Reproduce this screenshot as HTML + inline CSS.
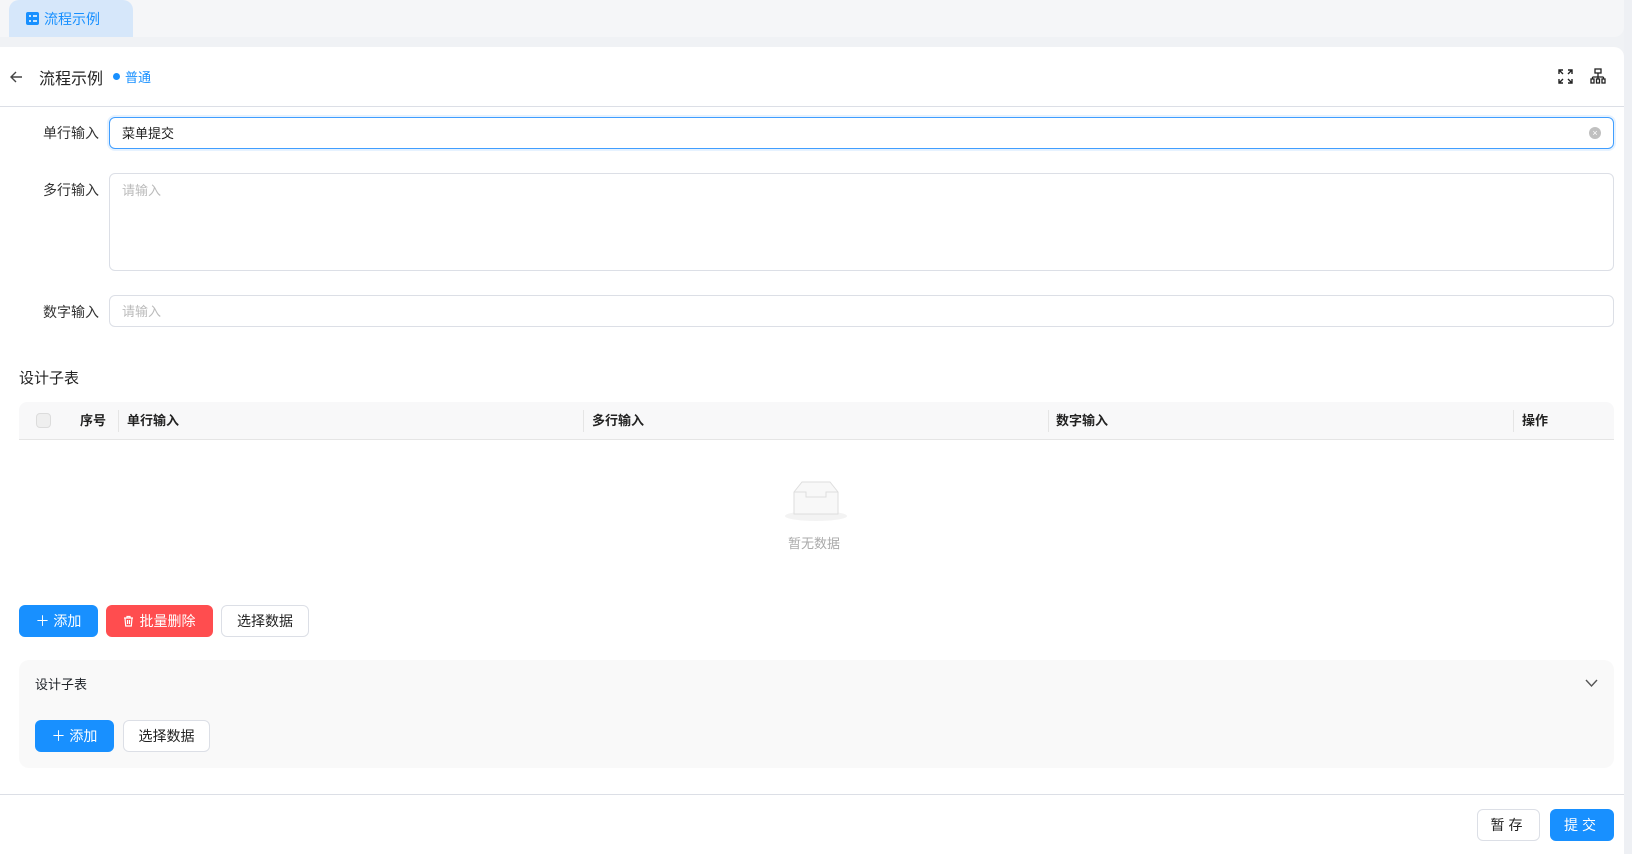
<!DOCTYPE html>
<html><head><meta charset="utf-8"><style>
*{box-sizing:border-box;margin:0;padding:0}
body{width:1632px;height:854px;overflow:hidden;background:#f0f2f5;font-family:"Liberation Sans","Noto Sans CJK SC",sans-serif;font-size:14px;color:#1f2329;position:relative}
.abs{position:absolute}
.tabbar{left:0;top:0;width:1624px;height:37px;background:#f5f6f8;border-radius:0 0 10px 0}
.tab{left:9px;top:0;width:124px;height:37px;background:#d6e7fa;border-radius:10px 10px 0 0;color:#1890ff;font-size:14px;line-height:38px;padding-left:35px}
.card{left:0;top:47px;width:1624px;height:807px;background:#fff;border-radius:0 10px 0 0}
.line{height:1px;background:#dcdfe6}
.lbl{width:99px;text-align:right;font-size:14px;color:#333}
.inp{left:109px;width:1505px;border:1px solid #dcdfe6;border-radius:6px;font-size:13px;color:#bbb;padding-left:12px}
.btn{height:32px;border-radius:6px;font-size:14px;line-height:32px;text-align:center}
.blue{background:#1890ff;color:#fff}
.red{background:#ff4d4f;color:#fff}
.wh{background:#fff;border:1px solid #dcdfe6;color:#222;line-height:30px}
.th{top:402px;font-size:13px;font-weight:bold;line-height:38px;color:#222}
.dv{top:410px;width:1px;height:22px;background:#e5e5e5}
</style></head><body>
<div class="abs tabbar"></div>
<div class="abs tab"><svg class="abs" style="left:17px;top:12px" width="13" height="13" viewBox="0 0 13 13"><rect width="13" height="13" rx="2" fill="#1890ff"/><path d="M3 4h2M7 4h4M3 9h2M7 9h4" stroke="#fff" stroke-width="1.4"/></svg>流程示例</div>
<div class="abs" style="left:1624px;top:0;width:8px;height:854px;background:#eef0f4"></div>
<div class="abs card"></div>
<svg class="abs" style="left:9px;top:70px" width="14" height="14" viewBox="0 0 14 14"><path d="M13 7H2M7 2L2 7l5 5" stroke="#444" stroke-width="1.4" fill="none"/></svg>
<div class="abs" style="left:39px;top:65px;font-size:16px;color:#222">流程示例</div>
<div class="abs" style="left:113px;top:73px;width:7px;height:7px;border-radius:50%;background:#1890ff"></div>
<div class="abs" style="left:125px;top:67px;font-size:13px;color:#1890ff">普通</div>
<svg class="abs" style="left:1558px;top:69px" width="15" height="15" viewBox="0 0 15 15" fill="none" stroke="#222" stroke-width="1.4"><path d="M1 5V1h4M1 1l4 4M10 1h4v4M14 1l-4 4M1 10v4h4M1 14l4-4M14 10v4h-4M14 14l-4-4"/></svg>
<svg class="abs" style="left:1590px;top:68px" width="16" height="16" viewBox="0 0 16 16" fill="none" stroke="#222" stroke-width="1.3"><rect x="5" y="1" width="6" height="4"/><path d="M8 5v4M2.5 9h11M2.5 9v2M8 9v2M13.5 9v2"/><rect x="1" y="11" width="3" height="4"/><rect x="6.5" y="11" width="3" height="4"/><rect x="12" y="11" width="3" height="4"/></svg>
<div class="abs line" style="left:0;top:106px;width:1624px"></div>

<div class="abs lbl" style="left:0;top:123px">单行输入</div>
<div class="abs inp" style="top:117px;height:32px;border-color:#409eff;box-shadow:0 0 0 2px #e6f2ff;color:#222;line-height:31px">菜单提交</div>
<div class="abs" style="left:1589px;top:127px;width:12px;height:12px;border-radius:50%;background:#c0c0c0;color:#fff;font-size:9px;line-height:12px;text-align:center">×</div>

<div class="abs lbl" style="left:0;top:180px">多行输入</div>
<div class="abs inp" style="top:173px;height:98px;padding-top:6px">请输入</div>

<div class="abs lbl" style="left:0;top:302px">数字输入</div>
<div class="abs inp" style="top:295px;height:32px;line-height:31px">请输入</div>

<div class="abs" style="left:19px;top:367px;font-size:15px;color:#222">设计子表</div>
<div class="abs" style="left:19px;top:402px;width:1595px;height:38px;background:#f8f8f9;border-radius:8px 8px 0 0;border-bottom:1px solid #e5e5e5"></div>
<div class="abs" style="left:36px;top:413px;width:15px;height:15px;border:1px solid #dcdcdc;border-radius:4px;background:#efefef"></div>
<div class="abs th" style="left:80px">序号</div>
<div class="abs dv" style="left:118px"></div>
<div class="abs th" style="left:127px">单行输入</div>
<div class="abs dv" style="left:583px"></div>
<div class="abs th" style="left:592px">多行输入</div>
<div class="abs dv" style="left:1048px"></div>
<div class="abs th" style="left:1056px">数字输入</div>
<div class="abs dv" style="left:1513px"></div>
<div class="abs th" style="left:1522px">操作</div>

<svg class="abs" style="left:784px;top:480px" width="64" height="44" viewBox="0 0 64 44"><ellipse cx="32" cy="36" rx="31" ry="5" fill="#f3f3f3"/><path d="M10 12L18 2h28l8 10v22H10z" fill="#f8f8f8" stroke="#dedede"/><path d="M10 12h12v5h20v-5h12" fill="none" stroke="#dedede"/></svg>
<div class="abs" style="left:788px;top:533px;font-size:13px;color:#aaa">暂无数据</div>

<div class="abs btn blue" style="left:19px;top:605px;width:79px">＋ 添加</div>
<div class="abs btn red" style="left:106px;top:605px;width:107px;padding-left:16px">批量删除<svg class="abs" style="left:17px;top:10px" width="11" height="12" viewBox="0 0 11 12" fill="none" stroke="#fff" stroke-width="1.2"><path d="M1 3h9M4 3V1.5h3V3M2 3l.7 8h5.6L9 3M4.5 5v4M6.5 5v4"/></svg></div>
<div class="abs btn wh" style="left:221px;top:605px;width:88px">选择数据</div>

<div class="abs" style="left:19px;top:660px;width:1595px;height:108px;background:#f9f9f9;border-radius:10px"></div>
<div class="abs" style="left:35px;top:674px;font-size:13px">设计子表</div>
<svg class="abs" style="left:1585px;top:679px" width="13" height="9" viewBox="0 0 13 9"><path d="M1 1l5.5 6L12 1" stroke="#555" stroke-width="1.4" fill="none"/></svg>
<div class="abs btn blue" style="left:35px;top:720px;width:79px">＋ 添加</div>
<div class="abs btn wh" style="left:123px;top:720px;width:87px">选择数据</div>

<div class="abs line" style="left:0;top:794px;width:1624px"></div>
<div class="abs btn wh" style="left:1477px;top:809px;width:63px;letter-spacing:4px">暂存</div>
<div class="abs btn blue" style="left:1550px;top:809px;width:64px;letter-spacing:4px">提交</div>
</body></html>
